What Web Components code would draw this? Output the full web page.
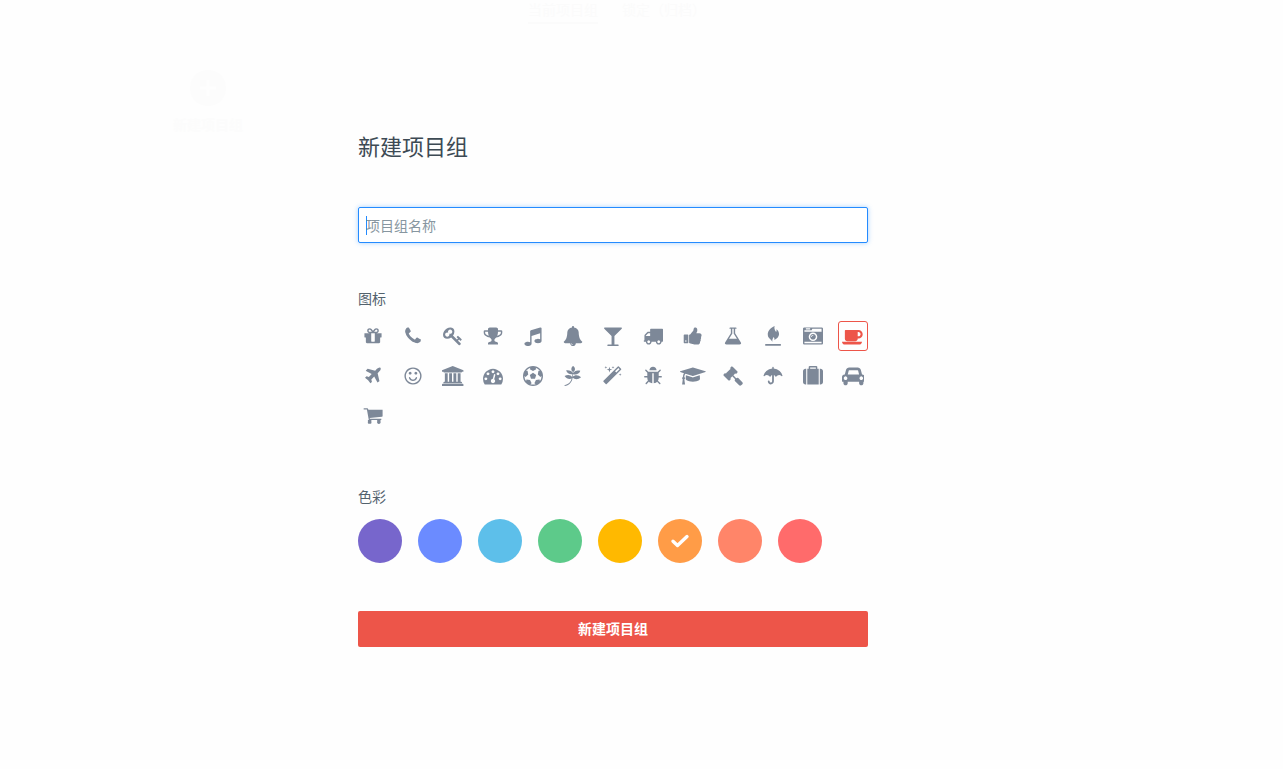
<!DOCTYPE html>
<html lang="zh-CN">
<head>
<meta charset="utf-8">
<meta name="viewport" content="width=device-width, initial-scale=1">
<title>新建项目组</title>
<style>
  body {
    margin: 0;
    background: #fefefe;
    color: #3d4a54;
    font: 14px/20px "Noto Sans CJK SC", sans-serif;
  }
</style>
</head>
<body>
<group-page>
  <project-board slot="board"></project-board>
  <group-form heading="新建项目组">
    <text-field placeholder="项目组名称"></text-field>
    <form-section heading="图标"><icon-picker value="coffee"></icon-picker></form-section>
    <form-section heading="色彩"><color-picker value="#ff9c47"></color-picker></form-section>
    <submit-button>新建项目组</submit-button>
  </group-form>
</group-page>
<script>
const ICONS = {
  gift: ['礼物', 1792, 'M1056 1356v-716h-320v716q0 25 18 38.5t46 13.5h192q28 0 46-13.5t18-38.5zm-456-844h195l-126-161q-26-31-69-31-40 0-68 28t-28 68 28 68 68 28zm688-96q0-40-28-68t-68-28q-43 0-69 31l-125 161h194q40 0 68-28t28-68zm376 256v320q0 14-9 23t-23 9h-96v416q0 40-28 68t-68 28h-1088q-40 0-68-28t-28-68v-416h-96q-14 0-23-9t-9-23v-320q0-14 9-23t23-9h440q-93 0-158.5-65.5t-65.5-158.5 65.5-158.5 158.5-65.5q107 0 168 77l128 165 128-165q61-77 168-77 93 0 158.5 65.5t65.5 158.5-65.5 158.5-158.5 65.5h440q14 0 23 9t9 23z'],
  phone: ['电话', 1792, 'M1600 1240q0 27-10 70.5t-21 68.5q-21 50-122 106-94 51-186 51-27 0-53-3.5t-57-12.5-47-14.5-55.5-20.5-49.5-18q-98-35-175-83-127-79-264-216t-216-264q-48-77-83-175-3-9-18-49.5t-20.5-55.5-14.5-47-12.5-57-3.5-53q0-92 51-186 56-101 106-122 25-11 68.5-21t70.5-10q14 0 21 3 18 6 53 76 11 19 30 54t35 63.5 31 53.5q3 4 17.5 25t21.5 35.5 7 28.5q0 20-28.5 50t-62 55-62 53-28.5 46q0 9 5 22.5t8.5 20.5 14 24 11.5 19q76 137 174 235t235 174q2 1 19 11.5t24 14 20.5 8.5 22.5 5q18 0 46-28.5t53-62 55-62 50-28.5q14 0 28.5 7t35.5 21.5 25 17.5q25 15 53.5 31t63.5 35 54 30q70 35 76 53 3 7 3 21z'],
  key: ['钥匙', 1792, 'M832 512q0-80-56-136t-136-56-136 56-56 136q0 42 19 83-41-19-83-19-80 0-136 56t-56 136 56 136 136 56 136-56 56-136q0-42-19-83 41 19 83 19 80 0 136-56t56-136zm851 704q0 17-49 66t-66 49q-9 0-28.5-16t-36.5-33-38.5-40-24.5-26l-96 96 220 220q28 28 28 68 0 42-39 81t-81 39q-40 0-68-28l-671-671q-176 131-365 131-163 0-265.5-102.5t-102.5-265.5q0-160 95-313t248-248 313-95q163 0 265.5 102.5t102.5 265.5q0 189-131 365l355 355 96-96q-3-3-26-24.5t-40-38.5-33-36.5-16-28.5q0-17 49-66t66-49q13 0 23 10 6 6 46 44.5t82 79.5 86.5 86 73 78 28.5 41z'],
  trophy: ['奖杯', 1792, 'M522 883q-74-162-74-371h-256v96q0 78 94.5 162t235.5 113zm1078-275v-96h-256q0 209-74 371 141-29 235.5-113t94.5-162zm128-128v128q0 71-41.5 143t-112 130-173 97.5-215.5 44.5q-42 54-95 95-38 34-52.5 72.5t-14.5 89.5q0 54 30.5 91t97.5 37q75 0 133.5 45.5t58.5 114.5v64q0 14-9 23t-23 9h-832q-14 0-23-9t-9-23v-64q0-69 58.5-114.5t133.5-45.5q67 0 97.5-37t30.5-91q0-51-14.5-89.5t-52.5-72.5q-53-41-95-95-113-5-215.5-44.5t-173-97.5-112-130-41.5-143v-128q0-40 28-68t68-28h288v-96q0-66 47-113t113-47h576q66 0 113 47t47 113v96h288q40 0 68 28t28 68z'],
  music: ['音乐', 1792, 'M1664 224v1120q0 50-34 89t-86 60.5-103.5 32-96.5 10.5-96.5-10.5-103.5-32-86-60.5-34-89 34-89 86-60.5 103.5-32 96.5-10.5q105 0 192 39v-537l-768 237v709q0 50-34 89t-86 60.5-103.5 32-96.5 10.5-96.5-10.5-103.5-32-86-60.5-34-89 34-89 86-60.5 103.5-32 96.5-10.5q105 0 192 39v-967q0-31 19-56.5t49-35.5l832-256q12-4 28-4 40 0 68 28t28 68z'],
  bell: ['铃铛', 1792, 'M912 1696q0-16-16-16-59 0-101.5-42.5t-42.5-101.5q0-16-16-16t-16 16q0 73 51.5 124.5t124.5 51.5q16 0 16-16zm816-288q0 52-38 90t-90 38h-448q0 106-75 181t-181 75-181-75-75-181h-448q-52 0-90-38t-38-90q50-42 91-88t85-119.5 74.5-158.5 50-206 19.5-260q0-152 117-282.5t307-158.5q-8-19-8-39 0-40 28-68t68-28 68 28 28 68q0 20-8 39 190 28 307 158.5t117 282.5q0 139 19.5 260t50 206 74.5 158.5 85 119.5 91 88z'],
  glass: ['酒杯', 1792, 'M1699 186q0 35-43 78l-632 632v768h320q26 0 45 19t19 45-19 45-45 19h-896q-26 0-45-19t-19-45 19-45 45-19h320v-768l-632-632q-43-43-43-78 0-23 18-36.5t38-17.5 43-4h1408q23 0 43 4t38 17.5 18 36.5z'],
  truck: ['货车', 1792, 'M640 1408q0-52-38-90t-90-38-90 38-38 90 38 90 90 38 90-38 38-90zm-384-512h384v-256h-158q-13 0-22 9l-195 195q-9 9-9 22v30zm1280 512q0-52-38-90t-90-38-90 38-38 90 38 90 90 38 90-38 38-90zm256-1088v1024q0 15-4 26.5t-13.5 18.5-16.5 11.5-23.5 6-22.5 2-25.5 0-22.5-.5q0 106-75 181t-181 75-181-75-75-181h-384q0 106-75 181t-181 75-181-75-75-181h-64q-3 0-22.5.5t-25.5 0-22.5-2-23.5-6-16.5-11.5-13.5-18.5-4-26.5q0-26 19-45t45-19v-320q0-8-.5-35t0-38 2.5-34.5 6.5-37 14-30.5 22.5-30l198-198q19-19 50.5-32t58.5-13h160v-192q0-26 19-45t45-19h1024q26 0 45 19t19 45z'],
  thumb: ['点赞', 1792, 'M320 1344q0-26-19-45t-45-19q-27 0-45.5 19t-18.5 45q0 27 18.5 45.5t45.5 18.5q26 0 45-18.5t19-45.5zm160-512v640q0 26-19 45t-45 19h-288q-26 0-45-19t-19-45v-640q0-26 19-45t45-19h288q26 0 45 19t19 45zm1184 0q0 86-55 149 15 44 15 76 3 76-43 137 17 56 0 117-15 57-54 94 9 112-49 181-64 76-197 78h-129q-66 0-144-15.5t-121.5-29-120.5-39.5q-123-43-158-44-26-1-45-19.5t-19-44.5v-641q0-25 18-43.5t43-20.5q24-2 76-59t101-121q68-87 101-120 18-18 31-48t17.5-48.5 13.5-60.5q7-39 12.5-61t19.5-52 34-50q19-19 45-19 46 0 82.5 10.5t60 26 40 40.5 24 45 12 50 5 45 .5 39q0 38-9.5 76t-19 60-27.5 56q-3 6-10 18t-11 22-8 24h277q78 0 135 57t57 135z'],
  flask: ['烧瓶', 1792, 'M1591 1448q56 89 21.5 152.5t-140.5 63.5h-1152q-106 0-140.5-63.5t21.5-152.5l503-793v-399h-64q-26 0-45-19t-19-45 19-45 45-19h512q26 0 45 19t19 45-19 45-45 19h-64v399zm-779-725l-272 429h712l-272-429-20-31v-436h-128v436z'],
  fire: ['火焰', 1792, 'M200 1620h1400v144h-1400zM1040 0C560 240 420 500 430 780 440 1080 700 1180 850 1420 800 1220 880 1120 960 980 1020 1060 1040 1150 1020 1260 1280 1120 1430 960 1440 720 1440 520 1320 380 1200 300 1220 400 1220 460 1180 540 1060 380 980 220 1040 0z'],
  camera: ['相机', 1792, 'M928 832q0-14-9-23t-23-9q-66 0-113 47t-47 113q0 14 9 23t23 9 23-9 9-23q0-40 28-68t68-28q14 0 23-9t9-23zm224 130q0 106-75 181t-181 75-181-75-75-181 75-181 181-75 181 75 75 181zm-1024 574h1536v-128h-1536v128zm1152-574q0-159-112.5-271.5t-271.5-112.5-271.5 112.5-112.5 271.5 112.5 271.5 271.5 112.5 271.5-112.5 112.5-271.5zm-1024-642h384v-128h-384v128zm-128 192h1536v-256h-828l-64 128h-644v128zm1664-256v1280q0 53-37.5 90.5t-90.5 37.5h-1536q-53 0-90.5-37.5t-37.5-90.5v-1280q0-53 37.5-90.5t90.5-37.5h1536q53 0 90.5 37.5t37.5 90.5z'],
  coffee: ['咖啡', 1920, 'M1664 736q0-80-56-136t-136-56h-64v384h64q80 0 136-56t56-136zm-1664 672h1792q0 106-75 181t-181 75h-1280q-106 0-181-75t-75-181zm1856-672q0 159-112.5 271.5t-271.5 112.5h-64v32q0 92-66 158t-158 66h-704q-92 0-158-66t-66-158v-736q0-26 19-45t45-19h1152q159 0 271.5 112.5t112.5 271.5z'],
  plane: ['飞机', 1792, 'M1568 160q44 52 12 148t-108 172l-161 161 160 696q5 19-12 33l-128 96q-7 6-19 6-4 0-7-1-15-3-21-16l-279-508-259 259 53 194q5 17-8 31l-96 96q-9 9-23 9h-2q-15-2-24-13l-189-252-252-189q-11-7-13-23-1-13 9-25l96-97q9-9 23-9 6 0 8 1l194 53 259-259-508-279q-14-8-17-24-2-16 9-27l128-128q14-13 30-8l665 159 160-160q76-76 172-108t148 12z'],
  smile: ['笑脸', 1792, 'M1262 1075q-37 121-138 195t-228 74-228-74-138-195q-8-25 4-48.5t38-31.5q25-8 48.5 4t31.5 38q25 80 92.5 129.5t151.5 49.5 151.5-49.5 92.5-129.5q8-26 32-38t49-4 37 31.5 4 48.5zm-494-435q0 53-37.5 90.5t-90.5 37.5-90.5-37.5-37.5-90.5 37.5-90.5 90.5-37.5 90.5 37.5 37.5 90.5zm512 0q0 53-37.5 90.5t-90.5 37.5-90.5-37.5-37.5-90.5 37.5-90.5 90.5-37.5 90.5 37.5 37.5 90.5zm256 256q0-130-51-248.5t-136.5-204-204-136.5-248.5-51-248.5 51-204 136.5-136.5 204-51 248.5 51 248.5 136.5 204 204 136.5 248.5 51 248.5-51 204-136.5 136.5-204 51-248.5zm128 0q0 209-103 385.5t-279.5 279.5-385.5 103-385.5-103-279.5-279.5-103-385.5 103-385.5 279.5-279.5 385.5-103 385.5 103 279.5 279.5 103 385.5z'],
  bank: ['银行', 1920, 'M960 0l960 384v128h-128q0 26-20.5 45t-48.5 19h-1526q-28 0-48.5-19t-20.5-45h-128v-128zm-704 640h256v768h128v-768h256v768h128v-768h256v768h128v-768h256v768h59q28 0 48.5 19t20.5 45v64h-1664v-64q0-26 20.5-45t48.5-19h59v-768zm1595 960q28 0 48.5 19t20.5 45v128h-1920v-128q0-26 20.5-45t48.5-19h1782z'],
  gauge: ['仪表', 1792, 'M384 1152q0-53-37.5-90.5t-90.5-37.5-90.5 37.5-37.5 90.5 37.5 90.5 90.5 37.5 90.5-37.5 37.5-90.5zm192-448q0-53-37.5-90.5t-90.5-37.5-90.5 37.5-37.5 90.5 37.5 90.5 90.5 37.5 90.5-37.5 37.5-90.5zm428 481l101-382q6-26-7.5-48.5t-38.5-29.5-48 6.5-30 39.5l-101 382q-60 5-107 43.5t-63 98.5q-20 77 20 146t117 89 146-20 89-117q16-60-6-117t-72-91zm660-33q0-53-37.5-90.5t-90.5-37.5-90.5 37.5-37.5 90.5 37.5 90.5 90.5 37.5 90.5-37.5 37.5-90.5zm-640-640q0-53-37.5-90.5t-90.5-37.5-90.5 37.5-37.5 90.5 37.5 90.5 90.5 37.5 90.5-37.5 37.5-90.5zm448 192q0-53-37.5-90.5t-90.5-37.5-90.5 37.5-37.5 90.5 37.5 90.5 90.5 37.5 90.5-37.5 37.5-90.5zm320 448q0 261-141 483-19 29-54 29h-1402q-35 0-54-29-141-221-141-483 0-182 71-348t191-286 286-191 348-71 348 71 286 191 191 286 71 348z'],
  ball: ['足球', 1792, 'M609 816l287-208 287 208-109 336h-355zm287-816q182 0 348 71t286 191 191 286 71 348-71 348-191 286-286 191-348 71-348-71-286-191-191-286-71-348 71-348 191-286 286-191 348-71zm619 1350q149-203 149-454v-3l-102 89-240-224 63-323 134 12q-150-206-389-282l53 124-287 159-287-159 53-124q-239 76-389 282l135-12 62 323-240 224-102-89v3q0 251 149 454l30-132 326 40 139 298-116 69q117 39 240 39t240-39l-116-69 139-298 326-40z'],
  branch: ['枝叶', 1792, 'M900 0C1110 130 1140 400 940 520L925 660C1000 440 1230 340 1550 420 1470 700 1180 800 910 730L880 960C1050 760 1400 780 1620 1010 1380 1220 1080 1240 865 1060 800 1480 530 1760 150 1792L130 1716C480 1670 700 1440 780 1130 560 1240 300 1140 140 900 400 740 700 780 815 980L850 730C610 770 340 640 280 380 560 340 810 440 865 620L880 520C690 390 720 130 900 0z'],
  magic: ['魔棒', 1792, 'M1190 581l293-293-107-107-293 293zm447-293q0 27-18 45l-1286 1286q-18 18-45 18t-45-18l-198-198q-18-18-18-45t18-45l1286-1286q18-18 45-18t45 18l198 198q18 18 18 45zm-1351-190l98 30-98 30-30 98-30-98-98-30 98-30 30-98zm350 162l196 60-196 60-60 196-60-196-196-60 196-60 60-196zm930 478l98 30-98 30-30 98-30-98-98-30 98-30 30-98zm-640-640l98 30-98 30-30 98-30-98-98-30 98-30 30-98z'],
  bug: ['甲虫', 1792, 'M1696 960q0 26-19 45t-45 19h-224q0 171-67 290l208 209q19 19 19 45t-19 45q-18 19-45 19t-45-19l-198-197q-5 5-15 13t-42 28.5-65 36.5-82 29-97 13v-896h-128v896q-51 0-101.5-13.5t-87-33-66-39-43.5-32.5l-15-14-183 207q-20 21-48 21-24 0-43-16-19-18-20.5-44.5t15.5-46.5l202-227q-58-114-58-274h-224q-26 0-45-19t-19-45 19-45 45-19h224v-294l-173-173q-19-19-19-45t19-45 45-19 45 19l173 173h844l173-173q19-19 45-19t45 19 19 45-19 45l-173 173v294h224q26 0 45 19t19 45zm-480-576h-640q0-133 93.5-226.5t226.5-93.5 226.5 93.5 93.5 226.5z'],
  graduate: ['学士帽', 2304, 'M1774 836l18 316q4 69-82 128t-235 93.5-323 34.5-323-34.5-235-93.5-82-128l18-316 574 181q22 7 48 7t48-7zm530-324q0 23-22 31l-1120 352q-4 1-10 1t-10-1l-652-206q-43 34-71 111.5t-34 178.5q63 36 63 109 0 69-58 107l58 433q2 14-8 25-9 11-24 11h-192q-15 0-24-11-10-11-8-25l58-433q-58-38-58-107 0-73 65-111 11-207 98-330l-333-104q-22-8-22-31t22-31l1120-352q4-1 10-1t10 1l1120 352q22 8 22 31z'],
  gavel: ['法槌', 1792, 'M1771 1536q0 53-37 90l-107 108q-39 37-91 37-53 0-90-37l-363-364q-38-36-38-90 0-53 43-96l-256-256-126 126q-14 14-34 14t-34-14q2 2 12.5 12t12.5 13 10 11.5 10 13.5 6 13.5 5.5 16.5 1.5 18q0 38-28 68-3 3-16.5 18t-19 20.5-18.5 16.5-22 15.5-22 9-26 4.5q-40 0-68-28l-408-408q-28-28-28-68 0-13 4.5-26t9-22 15.5-22 16.5-18.5 20.5-19 18-16.5q30-28 68-28 10 0 18 1.5t16.5 5.5 13.5 6 13.5 10 11.5 10 13 12.5 12 12.5q-14-14-14-34t14-34l348-348q14-14 34-14t34 14q-2-2-12.5-12t-12.5-13-10-11.5-10-13.5-6-13.5-5.5-16.5-1.5-18q0-38 28-68 3-3 16.5-18t19-20.5 18.5-16.5 22-15.5 22-9 26-4.5q40 0 68 28l408 408q28 28 28 68 0 13-4.5 26t-9 22-15.5 22-16.5 18.5-20.5 19-18 16.5q-30 28-68 28-10 0-18-1.5t-16.5-5.5-13.5-6-13.5-10-11.5-10-13-12.5-12-12.5q14 14 14 34t-14 34l-126 126 256 256q43-43 96-43 52 0 91 37l363 363q37 39 37 91z'],
  umbrella: ['雨伞', 1792, 'M832 230v-100q0-64 64-64t64 64v100Q1260 250 1490 440 1680 600 1744 860 1748 906 1700 910 1680 910 1655 890 1560 800 1440 800 1290 800 1190 940 1175 970 1152 970 1128 970 1114 940 1050 830 976 800V1376Q976 1500 890 1574 810 1648 704 1648 590 1648 510 1566 432 1490 432 1376 432 1296 512 1296 592 1296 592 1376 592 1488 704 1488 816 1488 816 1376V800Q742 830 678 940 664 970 640 970 617 970 602 940 502 800 352 800 232 800 137 890 117 910 92 910 44 904 48 860 112 600 302 440 532 250 832 230z'],
  suitcase: ['行李箱', 1792, 'M640 256h512v-128h-512v128zm-352 0v1408h-64q-92 0-158-66t-66-158v-960q0-92 66-158t158-66h64zm1120 0v1408h-1024v-1408h128v-160q0-40 28-68t68-28h576q40 0 68 28t28 68v160h128zm384 224v960q0 92-66 158t-158 66h-64v-1408h64q92 0 158 66t66 158z'],
  car: ['汽车', 2048, 'M480 1088q0-66-47-113t-113-47-113 47-47 113 47 113 113 47 113-47 47-113zm36-320h1016l-89-357q-2-8-14-17.5t-21-9.5h-768q-9 0-21 9.5t-14 17.5zm1372 320q0-66-47-113t-113-47-113 47-47 113 47 113 113 47 113-47 47-113zm160-96v384q0 14-9 23t-23 9h-96v128q0 80-56 136t-136 56-136-56-56-136v-128h-1024v128q0 80-56 136t-136 56-136-56-56-136v-128h-96q-14 0-23-9t-9-23v-384q0-93 65.5-158.5t158.5-65.5h28l105-419q23-94 104-157.5t179-63.5h768q98 0 179 63.5t104 157.5l105 419h28q93 0 158.5 65.5t65.5 158.5z'],
  cart: ['购物车', 1792, 'M60 200H380Q450 200 466 280L486 330H1756V900Q1756 950 1700 956L600 1064 620 1150H1640V1260H1570V1400A160 160 0 1 1 1270 1400V1260H750V1400A160 160 0 1 1 440 1400V1260H520L350 310H60z']
};

const COLORS = [
  ['#7766cc', '紫色'], ['#6b8bff', '蓝色'], ['#5dbfea', '天蓝'], ['#5dca8a', '绿色'],
  ['#ffb900', '黄色'], ['#ff9c47', '橙色'], ['#ff8569', '珊瑚色'], ['#ff6b6b', '红色']
];

class Base extends HTMLElement {
  connectedCallback() {
    if (this.shadowRoot) return;
    this.attachShadow({ mode: 'open' }).innerHTML = this.render();
    this.ready();
  }
  ready() {}
}

customElements.define('group-page', class extends Base {
  render() {
    return `<style>
      :host { display: block; position: relative; min-height: 100vh; }
      .board { position: absolute; inset: 0; }
      main { position: relative; box-sizing: border-box; padding: 130px 57px 40px 0; }
    </style>
    <div class="board"><slot name="board"></slot></div>
    <main><slot></slot></main>`;
  }
});

/* The board stays behind the form and shows through it only faintly. */
customElements.define('project-board', class extends Base {
  render() {
    return `<style>
      :host { display: block; color: #fbfbfb; padding-right: 57px; }
      nav { display: flex; justify-content: center; gap: 24px; padding-left: 8px; height: 24px; box-sizing: border-box; line-height: 18px; }
      a { color: inherit; text-decoration: none; height: 22px; }
      a.on { border-bottom: 2px solid #fbfbfb; }
      .card { display: grid; justify-items: center; gap: 8px; width: 110px; margin: 46px 0 0 153px; color: #fcfcfc; font-weight: 700; }
      svg { width: 36px; height: 36px; }
    </style>
    <nav><a class="on" href="#current">当前项目组</a><a href="#archive">锁定（归档）</a></nav>
    <div class="card">
      <svg viewBox="0 0 36 36" aria-hidden="true"><circle cx="18" cy="18" r="18" fill="#fcfcfc"/><path d="M18 10v16M10 18h16" stroke="#fefefe" stroke-width="3"/></svg>
      <span>新建项目组</span>
    </div>`;
  }
});

customElements.define('group-form', class extends Base {
  render() {
    return `<style>
      :host { display: block; max-width: 510px; margin: 0 auto; }
      h1 { margin: 0 0 47px; font-size: 22px; line-height: 30px; font-weight: 400; }
      form { display: flex; flex-direction: column; }
    </style>
    <form><h1>${this.getAttribute('heading')}</h1><slot></slot></form>`;
  }
});

customElements.define('text-field', class extends Base {
  render() {
    const text = this.getAttribute('placeholder');
    return `<style>
      :host { display: block; margin-bottom: 46px; }
      input {
        display: block; box-sizing: border-box; width: 100%; height: 36px; padding: 0 7px;
        border: 1px solid #248bff; border-radius: 2px; outline: 0;
        box-shadow: 0 0 5px rgba(36, 139, 255, .4);
        background: #fff; color: #3d4a54; font: inherit; caret-color: transparent;
      }
      input:placeholder-shown { background: linear-gradient(#248bff, #248bff) 7px 8px / 1px 19px no-repeat #fff; }
      input:not(:placeholder-shown) { caret-color: #248bff; }
      input::placeholder { color: #8796a0; opacity: 1; }
    </style>
    <input type="text" aria-label="${text}" placeholder="${text}">`;
  }
  ready() { this.shadowRoot.querySelector('input').focus(); }
});

customElements.define('form-section', class extends Base {
  render() {
    return `<style>
      :host { display: block; margin-bottom: 48px; }
      h2 { margin: 0 0 14px; font-size: 14px; line-height: 18px; font-weight: 400; color: #53626d; }
    </style>
    <h2>${this.getAttribute('heading')}</h2><slot></slot>`;
  }
});

customElements.define('glyph-icon', class extends Base {
  render() {
    const [, width, path] = ICONS[this.getAttribute('name')];
    return `<style>
      :host { display: flex; justify-content: center; }
      svg { flex: none; height: 20px; fill: currentColor; }
    </style>
    <svg viewBox="0 0 ${width} 1792" aria-hidden="true"><path d="${path}"/></svg>`;
  }
});

customElements.define('icon-picker', class extends Base {
  render() {
    const value = this.getAttribute('value');
    return `<style>
      :host { display: grid; grid-template-columns: repeat(auto-fill, 30px); gap: 10px; padding-bottom: 8px; }
      label {
        display: grid; align-items: center; justify-items: center; box-sizing: border-box;
        width: 30px; height: 30px; border: 1px solid transparent; border-radius: 3px;
        color: #7d8898; cursor: pointer;
      }
      label > * { grid-area: 1 / 1; }
      label:has(:checked) { border-color: #ed5549; color: #ed5549; }
      input { appearance: none; margin: 0; width: 28px; height: 28px; outline: 0; }
      glyph-icon { width: 28px; }
    </style>` + Object.entries(ICONS).map(([name, [title]]) => `
    <label><input type="radio" name="icon" value="${name}" aria-label="${title}"${name === value ? ' checked' : ''}><glyph-icon name="${name}"></glyph-icon></label>`).join('');
  }
});

customElements.define('color-picker', class extends Base {
  render() {
    const value = this.getAttribute('value');
    return `<style>
      :host { display: flex; flex-wrap: wrap; gap: 16px; }
      label { display: grid; place-items: center; width: 44px; height: 44px; border-radius: 50%; background: var(--swatch); cursor: pointer; }
      label > * { grid-area: 1 / 1; }
      input { appearance: none; margin: 0; width: 44px; height: 44px; outline: 0; }
      svg { width: 20px; height: 20px; visibility: hidden; pointer-events: none; }
      :checked + svg { visibility: visible; }
    </style>` + COLORS.map(([color, title]) => `
    <label style="--swatch: ${color}"><input type="radio" name="color" value="${color}" aria-label="${title}"${color === value ? ' checked' : ''}>
      <svg viewBox="0 0 20 20" fill="none" stroke="#fff" stroke-width="3.4" stroke-linecap="round" stroke-linejoin="round" aria-hidden="true"><path d="M3 10.2 7.5 14.4 17 5.6"/></svg></label>`).join('');
  }
});

customElements.define('submit-button', class extends Base {
  render() {
    return `<style>
      :host { display: block; }
      button {
        display: block; width: 100%; height: 36px; padding: 0 0 2px; border: 0; border-radius: 2px;
        background: #ed5549; color: #fff; font: inherit; font-weight: 700; cursor: pointer;
      }
    </style>
    <button type="button"><slot></slot></button>`;
  }
});
</script>
</body>
</html>
